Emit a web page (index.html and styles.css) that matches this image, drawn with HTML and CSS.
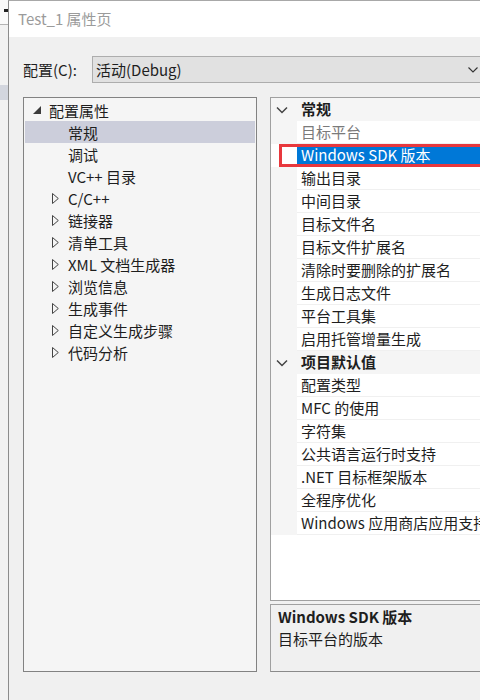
FILE: index.html
```html
<!DOCTYPE html>
<html lang="zh-CN">
<head>
  <meta charset="UTF-8">
  <title>Test_1 属性页</title>
  <link rel="stylesheet" href="styles.css">
</head>
<body>
  <div id="desk">
    <div class="behind">
      <div class="behind-top"><span class="mark"></span></div>
      <div class="behind-band"></div>
    </div>
    <div id="dialog">
      <div class="titlebar">Test_1 属性页</div>
      <div class="content">
        <div class="configRow">
          <label class="configLabel">配置(C):</label>
          <div class="combo">
            <span>活动(Debug)</span>
            <svg class="chev" width="10" height="6" viewBox="0 0 10 6"><polyline points="0.5,0.5 5,5 9.5,0.5" fill="none" stroke="#333" stroke-width="1.1"/></svg>
          </div>
        </div>
        <div class="main">
          <div class="tree">
            <div class="tnode lvl1"><span class="tw"><svg width="8" height="8" viewBox="0 0 8 8"><polygon points="8,0 8,8 0,8" fill="#3c3c3c"/></svg></span>配置属性</div>
            <div class="tnode lvl2 sel"><span class="tw"></span>常规</div>
            <div class="tnode lvl2"><span class="tw"></span>调试</div>
            <div class="tnode lvl2"><span class="tw"></span>VC++ 目录</div>
            <div class="tnode lvl2"><span class="tw"><svg width="7" height="11" viewBox="0 0 7 11"><polygon points="0.5,0.5 6.3,5.5 0.5,10.5" fill="none" stroke="#444" stroke-width="1"/></svg></span>C/C++</div>
            <div class="tnode lvl2"><span class="tw"><svg width="7" height="11" viewBox="0 0 7 11"><polygon points="0.5,0.5 6.3,5.5 0.5,10.5" fill="none" stroke="#444" stroke-width="1"/></svg></span>链接器</div>
            <div class="tnode lvl2"><span class="tw"><svg width="7" height="11" viewBox="0 0 7 11"><polygon points="0.5,0.5 6.3,5.5 0.5,10.5" fill="none" stroke="#444" stroke-width="1"/></svg></span>清单工具</div>
            <div class="tnode lvl2"><span class="tw"><svg width="7" height="11" viewBox="0 0 7 11"><polygon points="0.5,0.5 6.3,5.5 0.5,10.5" fill="none" stroke="#444" stroke-width="1"/></svg></span>XML 文档生成器</div>
            <div class="tnode lvl2"><span class="tw"><svg width="7" height="11" viewBox="0 0 7 11"><polygon points="0.5,0.5 6.3,5.5 0.5,10.5" fill="none" stroke="#444" stroke-width="1"/></svg></span>浏览信息</div>
            <div class="tnode lvl2"><span class="tw"><svg width="7" height="11" viewBox="0 0 7 11"><polygon points="0.5,0.5 6.3,5.5 0.5,10.5" fill="none" stroke="#444" stroke-width="1"/></svg></span>生成事件</div>
            <div class="tnode lvl2"><span class="tw"><svg width="7" height="11" viewBox="0 0 7 11"><polygon points="0.5,0.5 6.3,5.5 0.5,10.5" fill="none" stroke="#444" stroke-width="1"/></svg></span>自定义生成步骤</div>
            <div class="tnode lvl2"><span class="tw"><svg width="7" height="11" viewBox="0 0 7 11"><polygon points="0.5,0.5 6.3,5.5 0.5,10.5" fill="none" stroke="#444" stroke-width="1"/></svg></span>代码分析</div>
          </div>
          <div class="right">
            <div class="grid">
              <div class="prow cat"><span class="gut"><svg width="12" height="8" viewBox="0 0 12 8"><polyline points="1,1.5 6,6.5 11,1.5" fill="none" stroke="#444" stroke-width="1.5"/></svg></span><span class="pname">常规</span></div>
              <div class="prow dim"><span class="gut"></span><span class="pname">目标平台</span></div>
              <div class="prow sel marked"><span class="gut"></span><span class="pname">Windows SDK 版本</span></div>
              <div class="prow"><span class="gut"></span><span class="pname">输出目录</span></div>
              <div class="prow"><span class="gut"></span><span class="pname">中间目录</span></div>
              <div class="prow"><span class="gut"></span><span class="pname">目标文件名</span></div>
              <div class="prow"><span class="gut"></span><span class="pname">目标文件扩展名</span></div>
              <div class="prow"><span class="gut"></span><span class="pname">清除时要删除的扩展名</span></div>
              <div class="prow"><span class="gut"></span><span class="pname">生成日志文件</span></div>
              <div class="prow"><span class="gut"></span><span class="pname">平台工具集</span></div>
              <div class="prow"><span class="gut"></span><span class="pname">启用托管增量生成</span></div>
              <div class="prow cat"><span class="gut"><svg width="12" height="8" viewBox="0 0 12 8"><polyline points="1,1.5 6,6.5 11,1.5" fill="none" stroke="#444" stroke-width="1.5"/></svg></span><span class="pname">项目默认值</span></div>
              <div class="prow"><span class="gut"></span><span class="pname">配置类型</span></div>
              <div class="prow"><span class="gut"></span><span class="pname">MFC 的使用</span></div>
              <div class="prow"><span class="gut"></span><span class="pname">字符集</span></div>
              <div class="prow"><span class="gut"></span><span class="pname">公共语言运行时支持</span></div>
              <div class="prow"><span class="gut"></span><span class="pname">.NET 目标框架版本</span></div>
              <div class="prow"><span class="gut"></span><span class="pname">全程序优化</span></div>
              <div class="prow"><span class="gut"></span><span class="pname">Windows 应用商店应用支持</span></div>
            </div>
            <div class="desc">
              <div class="descTitle">Windows SDK 版本</div>
              <div class="descText">目标平台的版本</div>
            </div>
          </div>
        </div>
      </div>
    </div>
  </div>
</body>
</html>
```
FILE: styles.css
```css
html, body { margin:0; padding:0; }
body { width:480px; height:700px; overflow:hidden; background:#f0f0f0; font-family:"Noto Sans CJK SC", "Noto Sans", sans-serif; font-size:15px; color:#1e1e1e; }
#desk { display:flex; height:700px; }

/* window behind the dialog */
.behind { width:8px; flex:none; background:#f2f2f2; display:flex; flex-direction:column; }
.behind-top { height:24px; background:#fafafa; border-bottom:1px solid #b4b4b4; position:relative; }
.behind-top .mark { position:absolute; left:4px; top:9px; width:4px; height:3px; background:#222; }
.behind-band { margin-top:60px; height:15px; background:#d3d6de; }

#dialog { width:540px; flex:none; border-left:1px solid #8c8c8c; border-top:1px solid #a8a8a8; background:#f0f0f0; }
.titlebar { height:36px; background:#fff; color:#9b9b9b; line-height:36px; padding-left:9px; font-size:15px; }
.content { padding:19px 0 0 14px; }

.configRow { display:flex; align-items:center; height:27px; margin-bottom:14px; }
.configLabel { width:69px; flex:none; }
.combo { width:394px; height:27px; box-sizing:border-box; border:1px solid #adadad; background:#e1e1e1; display:flex; align-items:center; justify-content:space-between; padding:0 7px 0 3px; }
.chev { flex:none; }

.main { display:flex; gap:13px; }

/* left tree */
.tree { width:234px; height:575px; box-sizing:border-box; border:1px solid #828282; background:#f5f5f5; padding:1px; }
.tnode { height:22px; display:flex; align-items:center; white-space:nowrap; }
.tnode .tw { width:16px; flex:none; display:flex; align-items:center; }
.lvl1 { padding-left:8px; }
.lvl2 { padding-left:27px; }
.tnode.sel { background:#cccedb; }

/* property grid */
.right { width:260px; display:flex; flex-direction:column; gap:3px; }
.grid { height:504px; box-sizing:border-box; border:1px solid #a0a0a0; border-right:none; background:#fff; overflow:hidden; }
.prow { height:23px; display:flex; position:relative; white-space:nowrap; }
.gut { width:26px; flex:none; background:#f5f5f5; display:flex; align-items:center; justify-content:center; padding-right:5px; box-sizing:border-box; }
.pname { flex:1; padding-left:4px; line-height:22px; border-bottom:1px solid #f0f0f0; overflow:hidden; }
.cat .pname { background:#f5f5f5; font-weight:bold; border-bottom-color:#f5f5f5; }
.dim .pname { color:#7a7a7a; }
.sel .pname { background:#0078d7; color:#fff; border-bottom-color:#0078d7; }
.sel .gut { background:#fff; }
.marked::after { content:""; position:absolute; left:8px; right:-20px; top:0; bottom:0; border:3px solid #e8383d; pointer-events:none; }

.desc { height:68px; box-sizing:border-box; border:1px solid #a0a0a0; border-right:none; border-bottom-color:#8a8a8a; background:#f0f0f0; padding:1px 7px; }
.descTitle { font-weight:bold; line-height:22px; }
.descText { line-height:22px; }
```
